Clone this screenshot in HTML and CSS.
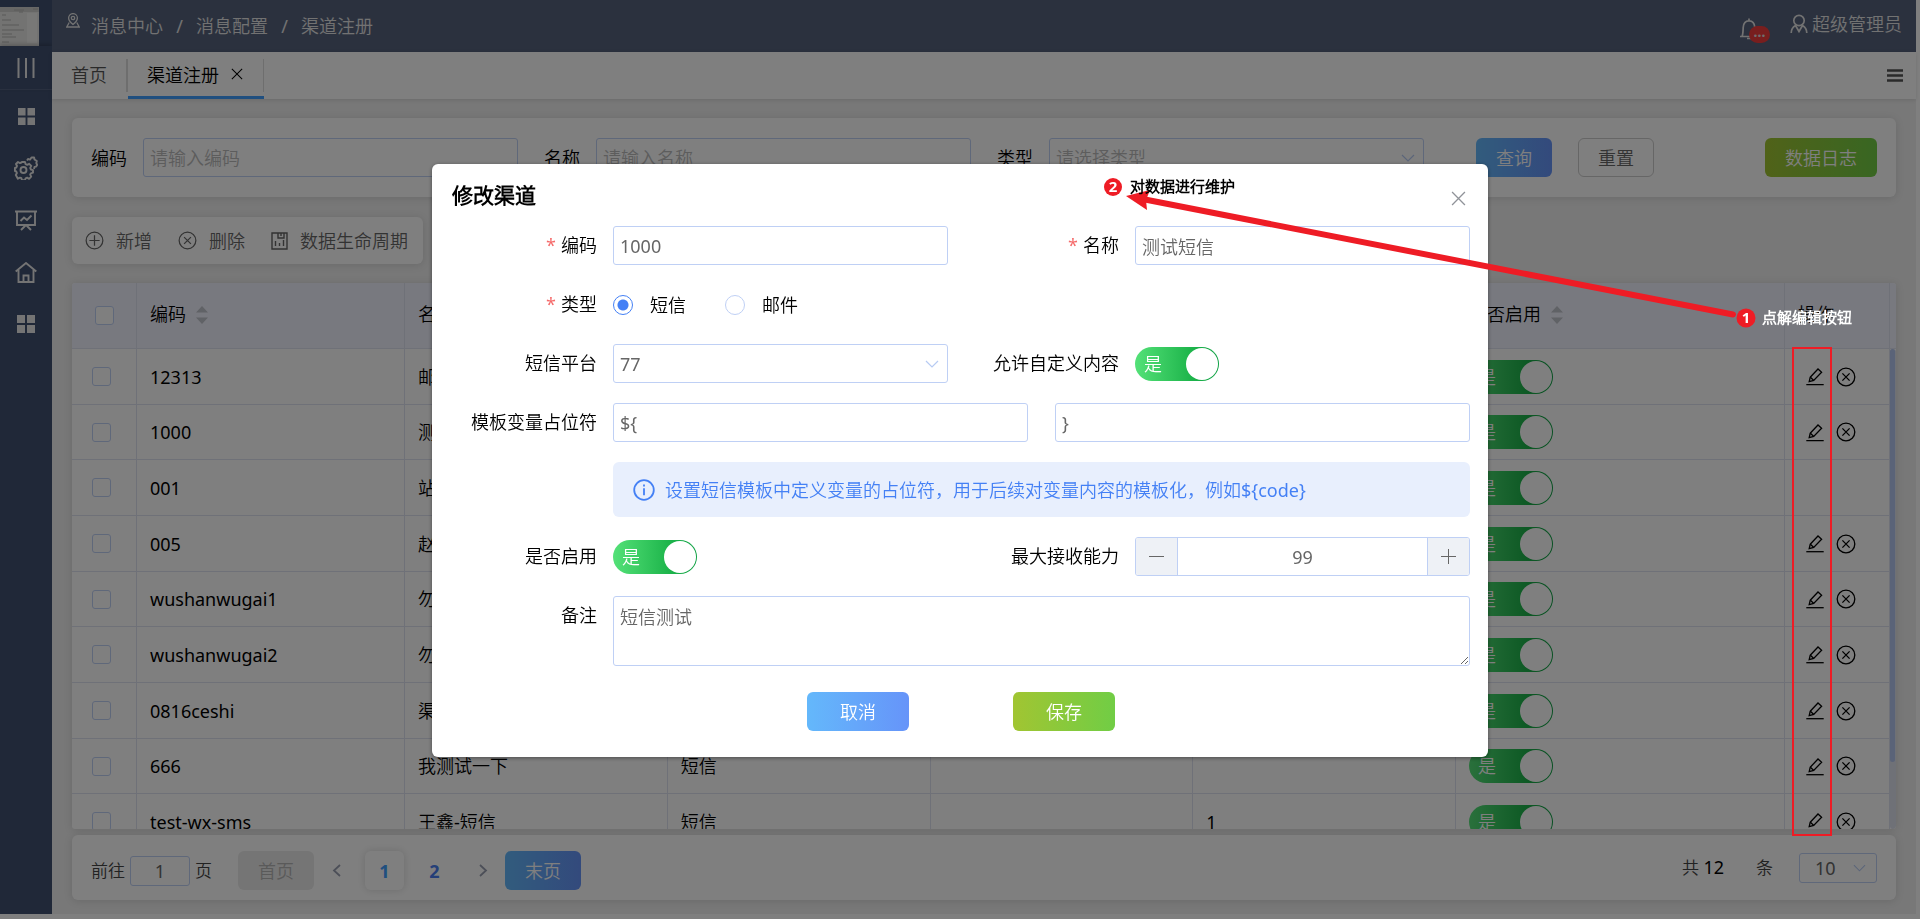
FILE: index.html
```html
<!DOCTYPE html>
<html lang="zh-CN">
<head>
<meta charset="utf-8">
<title>渠道注册</title>
<link rel="stylesheet" href="styles.css">
</head>
<body>
<svg class="sprite" aria-hidden="true">
  <symbol id="i-grid" viewBox="0 0 18 18"><path fill="currentColor" d="M0 0h8v8H0zM10 0h8v8h-8zM0 10h8v8H0zM10 10h8v8h-8z"/></symbol>
  <symbol id="i-edit" viewBox="0 0 18 18"><g fill="none" stroke="currentColor" stroke-width="1.3"><path d="M.3 17.2h17.4"/><path d="M4.2 9.8 12 1.5l3.6 3.2-7.9 8.3-4.5 1.2z"/><path d="M4.4 9.8l3.4 3.2"/></g></symbol>
  <symbol id="i-del" viewBox="0 0 20 20"><g fill="none" stroke="currentColor" stroke-width="1.3"><circle cx="10" cy="10" r="8.8"/><path d="M6.4 6.4l7.2 7.2M13.6 6.4l-7.2 7.2"/></g></symbol>
  <symbol id="i-add" viewBox="0 0 20 20"><g fill="none" stroke="currentColor" stroke-width="1.3"><circle cx="10" cy="10" r="8.8"/><path d="M10 4.6v10.8M4.6 10h10.8"/></g></symbol>
  <symbol id="i-down" viewBox="0 0 14 8"><path d="M1 1l6 6 6-6" fill="none" stroke="currentColor" stroke-width="1.2"/></symbol>
  <symbol id="i-x" viewBox="0 0 14 14"><path d="M1 1l12 12M13 1L1 13" fill="none" stroke="currentColor" stroke-width="1.2"/></symbol>
  <symbol id="i-sort" viewBox="0 0 12 18"><path fill="currentColor" d="M6 0l6 6.500H0zM6 18l6-6.500H0z"/></symbol>
</svg>

<div class="app">
  <aside class="sidebar">
    <svg class="avatar" viewBox="0 0 39 39"><path fill="#e6e6e4" d="M0 0h39v39H0z"/><path fill="#cfcfcd" d="M0 0h39v5H0z"/><path stroke="#b4b4b2" stroke-width="1" d="M2 8h4M14 3h10M2 13h9M2 18h17M2 23h22M2 27h10M2 30h14M2 35h7M19 5h4M33 2h5"/><path fill="#f0f0ee" d="M27 6h10v30H27z"/></svg>
    <button class="side-toggle" aria-label="折叠菜单"><svg width="18" height="20" viewBox="0 0 18 20"><path d="M1.500 0v20M9 0v20M16.500 0v20" stroke="currentColor" stroke-width="2"/></svg></button>
    <nav class="side-nav">
      <a href="#" aria-label="应用"><svg width="17" height="17"><use href="#i-grid"/></svg></a>
      <a href="#" aria-label="设置"><svg width="24" height="24" viewBox="0 0 24 24" fill="none" stroke="currentColor" stroke-width="1.900" stroke-linejoin="round"><circle cx="9.500" cy="14" r="3"/><path d="M8 6h3l.6 2.200 1.600.7 2-1.100 2.100 2.100-1.100 2 .7 1.600 2.100.6v2.600l-2.200.6-.6 1.400 1 2-2.100 2.100-2-1.100-1.500.6-.6 2H8l-.6-2.100-1.500-.6-2 1.100L1.800 19l1.100-2-.6-1.500L.9 15v-3l1.500-.5.6-1.500-1-2L4 6l1.900 1.100 1.500-.6z"/><path d="M13 4.500l1-1.500 2 .6L17.500 1.500h2.600l.4 2 2.300 1.500-.5 2 .9 2-1.200 1.600-1.500.3-.5 2.100"/></svg></a>
      <a href="#" aria-label="监控"><svg width="22" height="21" viewBox="0 0 22 21" fill="none" stroke="currentColor" stroke-width="1.900"><path d="M0 1.500h22M2 1.500v13.500h18V1.500M5.500 11l3.500-3.500 3 2.500 4.500-4.500M11 15l-5 5M11 15l5 5"/></svg></a>
      <a href="#" aria-label="首页"><svg width="22" height="21" viewBox="0 0 22 21" fill="none" stroke="currentColor" stroke-width="1.900"><path d="M.7 9.500L11 1l10.300 8.500M3.500 8v12h15V8M8.500 20v-6.500h5V20"/></svg></a>
      <a href="#" aria-label="模块"><svg width="18" height="18"><use href="#i-grid"/></svg></a>
    </nav>
  </aside>

  <div class="main">
    <header class="topbar">
      <nav class="crumbs">
        <svg class="pin" width="14" height="15" viewBox="0 0 14 15" fill="none" stroke="currentColor" stroke-width="1.300"><path d="M7 11.500C4.500 9.500 2.600 7.600 2.600 5A4.400 4.400 0 0 1 11.400 5c0 2.600-1.900 4.500-4.400 6.500z"/><circle cx="7" cy="5" r="1.700"/><path d="M3.200 9.500L.8 14h12.400l-2.400-4.500"/></svg>
        <a href="#">消息中心</a><i>/</i><a href="#">消息配置</a><i>/</i><a href="#">渠道注册</a>
      </nav>
      <div class="user">
        <span class="bell"><svg width="20" height="22" viewBox="0 0 20 22" fill="none" stroke="currentColor" stroke-width="1.700"><path d="M10 .5v2M1 18.500h18M3 18.500c1-2 1-4 1.200-9C4.400 5.500 6.500 2.800 10 2.800s5.600 2.700 5.800 6.700c.2 5 .2 7 1.200 9M8 20.500h4"/></svg><b>...</b></span>
        <svg width="18" height="20" viewBox="0 0 18 20" fill="none" stroke="currentColor" stroke-width="1.700"><circle cx="9" cy="6.500" r="5.200"/><path d="M1.200 19c0-3.500 1.700-6 4.300-7.500l3.500 6 3.500-6c2.600 1.500 4.300 4 4.300 7.500"/></svg>
        <span>超级管理员</span>
      </div>
    </header>

    <div class="tabs">
      <a class="tab" href="#">首页</a>
      <a class="tab tab-on" href="#">渠道注册<svg width="12" height="12"><use href="#i-x"/></svg></a>
      <button class="tabs-menu" aria-label="标签菜单"><svg width="16" height="13" viewBox="0 0 16 13"><path d="M0 1.500h16M0 6.500h16M0 11.500h16" stroke="currentColor" stroke-width="2.600"/></svg></button>
    </div>

    <div class="content">
      <form class="card search">
        <div class="field"><label for="q-code">编码</label><input id="q-code" class="control" placeholder="请输入编码"></div>
        <div class="field"><label for="q-name">名称</label><input id="q-name" class="control" placeholder="请输入名称"></div>
        <div class="field"><label for="q-type">类型</label><div class="select"><select id="q-type" class="control empty"><option>请选择类型</option></select><svg width="14" height="8"><use href="#i-down"/></svg></div></div>
        <div class="search-actions">
          <button type="button" class="btn blue">查询</button>
          <button type="button" class="btn plain">重置</button>
          <button type="button" class="btn green log">数据日志</button>
        </div>
      </form>

      <div class="card toolbar">
        <button><svg width="19" height="19"><use href="#i-add"/></svg>新增</button>
        <button><svg width="19" height="19"><use href="#i-del"/></svg>删除</button>
        <button><svg width="17" height="18" viewBox="0 0 17 18" fill="none" stroke="currentColor" stroke-width="1.400"><path d="M1 1h15v16H1zM7 1v5h6V1M10 1v3M4.500 9v5M8.500 11v3M12.500 8v6"/></svg>数据生命周期</button>
      </div>

      <div class="card grid">
        <table>
          <colgroup><col class="c-check"><col class="c-code"><col><col><col><col><col class="c-on"><col class="c-op"></colgroup>
          <thead><tr>
            <th class="check"><input type="checkbox" aria-label="全选"></th>
            <th>编码<svg width="12" height="18"><use href="#i-sort"/></svg></th>
            <th>名称<svg width="12" height="18"><use href="#i-sort"/></svg></th>
            <th>类型</th><th></th><th></th>
            <th>是否启用<svg width="12" height="18"><use href="#i-sort"/></svg></th>
            <th>操作</th>
          </tr></thead>
          <tbody>
            <tr><td class="check"><input type="checkbox" aria-label="选择"></td><td>12313</td><td>邮件</td><td>邮件</td><td></td><td></td><td><label class="switch"><input type="checkbox" checked>是</label></td><td class="ops"><button aria-label="编辑"><svg width="18" height="19"><use href="#i-edit"/></svg></button><button aria-label="删除"><svg width="20" height="20"><use href="#i-del"/></svg></button></td></tr>
            <tr><td class="check"><input type="checkbox" aria-label="选择"></td><td>1000</td><td>测试短信</td><td>短信</td><td></td><td></td><td><label class="switch"><input type="checkbox" checked>是</label></td><td class="ops"><button aria-label="编辑"><svg width="18" height="19"><use href="#i-edit"/></svg></button><button aria-label="删除"><svg width="20" height="20"><use href="#i-del"/></svg></button></td></tr>
            <tr><td class="check"><input type="checkbox" aria-label="选择"></td><td>001</td><td>站内信</td><td></td><td></td><td></td><td><label class="switch"><input type="checkbox" checked>是</label></td><td class="ops"></td></tr>
            <tr><td class="check"><input type="checkbox" aria-label="选择"></td><td>005</td><td>赵</td><td></td><td></td><td></td><td><label class="switch"><input type="checkbox" checked>是</label></td><td class="ops"><button aria-label="编辑"><svg width="18" height="19"><use href="#i-edit"/></svg></button><button aria-label="删除"><svg width="20" height="20"><use href="#i-del"/></svg></button></td></tr>
            <tr><td class="check"><input type="checkbox" aria-label="选择"></td><td>wushanwugai1</td><td>勿</td><td></td><td></td><td></td><td><label class="switch"><input type="checkbox" checked>是</label></td><td class="ops"><button aria-label="编辑"><svg width="18" height="19"><use href="#i-edit"/></svg></button><button aria-label="删除"><svg width="20" height="20"><use href="#i-del"/></svg></button></td></tr>
            <tr><td class="check"><input type="checkbox" aria-label="选择"></td><td>wushanwugai2</td><td>勿</td><td></td><td></td><td></td><td><label class="switch"><input type="checkbox" checked>是</label></td><td class="ops"><button aria-label="编辑"><svg width="18" height="19"><use href="#i-edit"/></svg></button><button aria-label="删除"><svg width="20" height="20"><use href="#i-del"/></svg></button></td></tr>
            <tr><td class="check"><input type="checkbox" aria-label="选择"></td><td>0816ceshi</td><td>渠道</td><td></td><td></td><td></td><td><label class="switch"><input type="checkbox" checked>是</label></td><td class="ops"><button aria-label="编辑"><svg width="18" height="19"><use href="#i-edit"/></svg></button><button aria-label="删除"><svg width="20" height="20"><use href="#i-del"/></svg></button></td></tr>
            <tr><td class="check"><input type="checkbox" aria-label="选择"></td><td>666</td><td>我测试一下</td><td>短信</td><td></td><td></td><td><label class="switch"><input type="checkbox" checked>是</label></td><td class="ops"><button aria-label="编辑"><svg width="18" height="19"><use href="#i-edit"/></svg></button><button aria-label="删除"><svg width="20" height="20"><use href="#i-del"/></svg></button></td></tr>
            <tr><td class="check"><input type="checkbox" aria-label="选择"></td><td>test-wx-sms</td><td>王鑫-短信</td><td>短信</td><td></td><td>1</td><td><label class="switch"><input type="checkbox" checked>是</label></td><td class="ops"><button aria-label="编辑"><svg width="18" height="19"><use href="#i-edit"/></svg></button><button aria-label="删除"><svg width="20" height="20"><use href="#i-del"/></svg></button></td></tr>
          </tbody>
        </table>
        <div class="scroll"><div class="scroll-head"></div><div class="scroll-track"><div class="scroll-thumb"></div></div></div>
      </div>

      <div class="card pager">
        <label class="goto">前往<input class="control" value="1">页</label>
        <button class="btn off" disabled>首页</button>
        <button class="arrow" aria-label="上一页"><svg width="9" height="13" viewBox="0 0 9 13"><path d="M8 1L2 6.500 8 12" fill="none" stroke="currentColor" stroke-width="1.800"/></svg></button>
        <button class="num on">1</button>
        <button class="num">2</button>
        <button class="arrow" aria-label="下一页"><svg width="9" height="13" viewBox="0 0 9 13"><path d="M1 1l6 5.500L1 12" fill="none" stroke="currentColor" stroke-width="1.800"/></svg></button>
        <button class="btn blue last">末页</button>
        <div class="total"><span>共 <em>12</em></span><span>条</span>
          <div class="select small"><select class="control" aria-label="每页条数"><option>10</option></select><svg width="13" height="8"><use href="#i-down"/></svg></div>
        </div>
      </div>
    </div>
  </div>
</div>

<div class="mask">
  <form class="dialog" role="dialog" aria-labelledby="dlg-title">
    <div class="dialog-head"><h2 id="dlg-title">修改渠道</h2><button type="button" class="close" aria-label="关闭"><svg width="15" height="15"><use href="#i-x"/></svg></button></div>
    <div class="rows">
      <div class="row two">
        <label class="req" for="f-code">编码</label><input id="f-code" class="control" value="1000">
        <label class="req" for="f-name">名称</label><input id="f-name" class="control" value="测试短信">
      </div>
      <div class="row">
        <span class="req lab">类型</span>
        <div class="radios"><label><input type="radio" name="type" checked>短信</label><label><input type="radio" name="type">邮件</label></div>
      </div>
      <div class="row two">
        <label for="f-plat">短信平台</label><div class="select"><select id="f-plat" class="control"><option>77</option></select><svg width="14" height="8"><use href="#i-down"/></svg></div>
        <label for="f-custom">允许自定义内容</label><div><label class="switch"><input id="f-custom" type="checkbox" checked>是</label></div>
      </div>
      <div class="row">
        <label for="f-pre">模板变量占位符</label>
        <div class="pair"><input id="f-pre" class="control" value="${"><input class="control" value="}" aria-label="占位符后缀"></div>
      </div>
      <div class="row">
        <span></span>
        <p class="tip"><svg width="22" height="22" viewBox="0 0 22 22" fill="none" stroke="currentColor" stroke-width="1.800"><circle cx="11" cy="11" r="9.800"/><path d="M11 9.200v7M11 5.400v2"/></svg>设置短信模板中定义变量的占位符，用于后续对变量内容的模板化，例如${code}</p>
      </div>
      <div class="row two">
        <label for="f-on">是否启用</label><div><label class="switch"><input id="f-on" type="checkbox" checked>是</label></div>
        <label for="f-max">最大接收能力</label>
        <div class="stepper"><button type="button" aria-label="减"><svg width="15" height="15" viewBox="0 0 15 15"><path d="M0 7.500h15" stroke="currentColor"/></svg></button><input id="f-max" value="99"><button type="button" aria-label="加"><svg width="15" height="15" viewBox="0 0 15 15"><path d="M0 7.500h15M7.500 0v15" stroke="currentColor"/></svg></button></div>
      </div>
      <div class="row">
        <label for="f-note">备注</label><textarea id="f-note" class="control">短信测试</textarea>
      </div>
    </div>
    <div class="dialog-foot"><button type="button" class="btn blue">取消</button><button type="button" class="btn green">保存</button></div>
  </form>
</div>

<svg class="notes">
  <g fill="none" stroke="#ee1c25"><rect x="1793" y="348" width="38" height="487" stroke-width="2"/><path d="M1145 199.500L1733 314.500" stroke-width="6" stroke-linecap="round"/></g>
  <path fill="#ee1c25" d="M1126 196l24-6-4 10 1 10z"/>
  <g fill="#ee1c25"><circle cx="1113" cy="187" r="9"/><circle cx="1746" cy="318" r="9.500"/></g>
  <g class="note-num"><text x="1113" y="192">2</text><text x="1746" y="323">1</text></g>
  <text class="note-dark" x="1130" y="192">对数据进行维护</text>
  <text class="note-light" x="1762" y="323">点解编辑按钮</text>
</svg>
</body>
</html>
```
FILE: styles.css
```css
* { box-sizing: border-box; }
body { margin: 0; background: #fff; color: #000; font: 400 18px/24px "Noto Sans", "Noto Sans CJK SC DemiLight", "Noto Sans CJK SC", sans-serif; overflow: hidden; }
button, input, select, textarea { font: inherit; color: inherit; margin: 0; }
button { border: 0; padding: 0; background: none; display: inline-flex; align-items: center; justify-content: center; }
a { color: inherit; text-decoration: none; }
svg { flex: none; display: block; }
.sprite { position: absolute; width: 0; height: 0; }

.app { display: flex; height: calc(100vh - 5px); margin-right: 4px; background: #f0f0f0; }
.sidebar { width: 52px; background: #405070; color: #e8e8e8; display: flex; flex-direction: column; }
.avatar { width: 39px; height: 39px; margin-top: 7px; }
.side-toggle { height: 44px; border-bottom: 1px solid #53617f; box-shadow: 0 -2px 4px rgba(0,0,0,.2); }
.side-nav { display: flex; flex-direction: column; align-items: center; }
.side-nav a { height: 52px; display: flex; align-items: center; }

.main { flex: 1; min-width: 0; display: flex; flex-direction: column; }
.topbar { height: 52px; padding: 0 14px; background: #56627c; color: #e4e4e4; display: flex; justify-content: space-between; }
.crumbs { display: flex; align-items: center; }
.crumbs i { width: 33px; text-align: center; font-style: normal; }
.pin { margin: 0 11px 12px 0; }
.user { display: flex; align-items: center; gap: 4px; padding-bottom: 5px; }
.bell { position: relative; margin-right: 27px; padding-top: 10px; }
.bell b { position: absolute; left: 10px; top: 18px; width: 21px; height: 17px; border-radius: 9px; background: #f03c3c; font-size: 14px; line-height: 12px; text-align: center; color: #ddd; }

.tabs { height: 47px; background: #fff; display: flex; box-shadow: 0 1px 4px rgba(0,0,0,.12); position: relative; }
.tab { padding: 11px 21px 0 19px; color: #555; background: linear-gradient(#ddd, #ddd) right 7px / 2px 33px no-repeat; }
.tab-on { color: #000; display: flex; gap: 12px; border-bottom: 3px solid #409eff; padding: 11px 21px 0 19px; background-size: 1px 33px; }
.tab-on svg { margin-top: 5px; }
.tabs-menu { margin-left: auto; padding-right: 13px; color: #555; }

.content { flex: 1; min-height: 0; padding: 19px 20px 14px; display: flex; flex-direction: column; }
.card { background: #fff; border-radius: 6px; box-shadow: 0 1px 8px rgba(0,0,0,.12); }
.control { width: 100%; min-width: 0; height: 39px; padding: 0 6px; border: 1px solid #bfd0f5; border-radius: 3px; background: #fff; color: #666; outline: 0; }
.control::placeholder { color: #bbb; opacity: 1; }
.select { position: relative; }
.select select { appearance: none; }
.select .empty { color: #bbb; }
.select svg { position: absolute; right: 9px; top: 16px; color: #b7cbf3; }
.btn { height: 39px; border-radius: 6px; color: #fff; }
.blue { background: linear-gradient(90deg, #64b8fb, #6694f9); }
.green { background: linear-gradient(90deg, #a1c532, #71cd45); }
.plain { border: 1px solid #ccc; color: #666; }

.search { height: 79px; padding: 0 19px; display: flex; align-items: center; gap: 26px; }
.field { flex: 1; display: flex; align-items: center; gap: 16px; white-space: nowrap; }
.field .select { flex: 1; }
.search-actions { width: 427px; padding-left: 26px; display: flex; gap: 26px; }
.search-actions .btn { width: 76px; }
.search-actions .log { width: 112px; margin-left: auto; }

.toolbar { margin: 20px 0 19px; height: 47px; padding: 0 15px 0 13px; align-self: flex-start; display: flex; gap: 26px; color: #666; }
.toolbar button { gap: 12px; }

.grid { flex: 1; min-height: 0; overflow: hidden; display: flex; align-items: flex-start; border-radius: 3px; }
table { width: 100%; min-width: 0; flex: 1; table-layout: fixed; border-collapse: separate; border-spacing: 0; }
.c-check { width: 65px; }
.c-code { width: 268px; }
.c-on { width: 329px; }
.c-op { width: 105px; }
th, td { padding: 0 13px; border-right: 1px solid #dfe2f0; border-bottom: 1px solid #dfe2f0; text-align: left; font-weight: inherit; height: 56px; }
th { height: 66px; background: #f1f3fe; padding-bottom: 4px; }
tbody tr:nth-child(3n+2) td { height: 55px; }
th svg { display: inline-block; vertical-align: -3px; margin-left: 10px; color: #c0c4cc; }
td.check { padding: 0 20px; }
th.check { padding: 0 23px; }
.check input { appearance: none; display: block; width: 19px; height: 19px; border: 1px solid #bfd0f5; border-radius: 3px; background: #fff; }
td.ops { padding: 0 0 4px 21px; }
.ops button { margin-right: 12px; vertical-align: middle; }
.scroll { flex: none; width: 6px; align-self: stretch; display: flex; flex-direction: column; }
.scroll-head { height: 66px; background: #f1f3fe; border-bottom: 1px solid #dfe2f0; }
.scroll-track { flex: 1; background: #dfe3ee; border-radius: 3px; }
.scroll-thumb { width: 5px; height: 86%; background: #b4c6f0; border-radius: 3px; }

.switch { position: relative; display: flex; align-items: center; width: 84px; height: 34px; padding-left: 9px; border-radius: 17px; color: #fff; background: linear-gradient(90deg, #54e178, #1fb64c 65%, #0ea043); }
.switch input { position: absolute; opacity: 0; }
.switch::after { content: ""; position: absolute; right: 1px; top: 1px; width: 32px; height: 32px; border-radius: 50%; background: #fff; }

.pager { margin-top: 6px; height: 65px; padding: 6px 19px 0; display: flex; align-items: center; color: #444; }
.goto { display: flex; align-items: center; font-size: 17px; gap: 5px; margin-right: 26px; }
.goto .control { width: 60px; height: 30px; text-align: center; font-size: 18px; }
.pager .btn { width: 76px; }
.off { background: #ebebeb; color: #b4b4b4; }
.arrow { width: 44px; height: 39px; margin-right: 7px; color: #999fb0; }
.num { width: 39px; height: 39px; border-radius: 6px; font-weight: 700; color: #4a7ef0; }
.num + .num { margin-left: 11px; }
.num + .arrow { margin: 0 0 0 7px; }
.num.on { color: #409eff; box-shadow: 0 0 8px rgba(0,0,0,.15); }
.total { margin-left: auto; display: flex; align-items: center; font-size: 17px; gap: 32px; padding-bottom: 6px; }
.total em { font-style: normal; font-size: 18px; color: #000; }
.total > span + span { margin-right: -6px; }
.small { width: 78px; }
.small .control { height: 30px; padding-left: 15px; font-size: 18px; }
.small.select svg { top: 11px; right: 11px; }

.mask { position: fixed; inset: 0; background: rgba(0,0,0,.5); display: flex; align-items: center; justify-content: center; padding-top: 2px; }
.dialog { width: 55%; background: #fff; border-radius: 6px; box-shadow: 0 1px 4px rgba(0,0,0,.4); padding: 16px 18px 26px 20px; }
.dialog-head { display: flex; justify-content: space-between; height: 46px; }
h2 { margin: 0; font-size: 21px; line-height: 30px; font-weight: 700; }
.close { height: 34px; padding: 2px 4px 0 0; color: #909399; }
.rows { display: flex; flex-direction: column; gap: 20px; }
.row { display: grid; grid-template-columns: 145px 1fr; column-gap: 16px; min-height: 39px; align-items: center; }
.row.two { grid-template-columns: 145px 1fr 155px 1fr; }
.row > label, .lab { text-align: right; line-height: 39px; align-self: start; white-space: nowrap; }
.req::before { content: "*"; color: #f56c6c; margin-right: 5px; }
.radios { display: flex; gap: 39px; }
.radios label { display: flex; align-items: center; gap: 17px; }
.radios input { appearance: none; width: 20px; height: 20px; border: 1px solid #bfd0f5; border-radius: 50%; background: #fff; }
.radios input:checked { border-color: #4480f5; background: radial-gradient(#4480f5 5px, #fff 6px); }
.pair { display: grid; grid-template-columns: 1fr 1fr; gap: 27px; }
.tip { margin: 0; height: 55px; padding-left: 20px; border-radius: 6px; background: #e8effd; color: #4480f5; display: flex; align-items: center; gap: 10px; white-space: nowrap; }
.stepper { display: flex; height: 39px; border: 1px solid #bfd0f5; border-radius: 3px; color: #666; overflow: hidden; }
.stepper button { width: 41px; background: #eef1f6; }
.stepper input { flex: 1; min-width: 0; border: solid #bfd0f5; border-width: 0 1px; text-align: center; outline: 0; }
textarea.control { height: 70px; padding: 8px 6px; display: block; }
.dialog-foot { display: flex; justify-content: center; gap: 104px; padding-top: 26px; }
.dialog-foot .btn { width: 102px; }

.notes { position: fixed; inset: 0; width: 100%; height: 100%; pointer-events: none; font-weight: 700; font-size: 15px; }
.note-num { fill: #fff; text-anchor: middle; }
.note-dark { fill: #000; }
.note-light { fill: #fff; }
```
